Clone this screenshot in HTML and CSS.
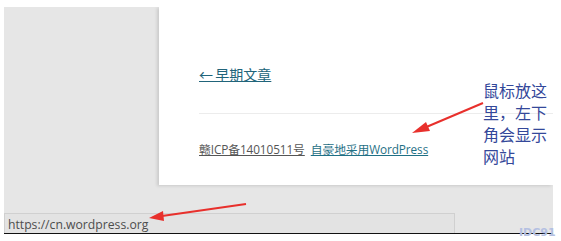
FILE: index.html
```html
<!DOCTYPE html>
<html lang="zh-CN">
<head>
    <meta charset="utf-8">
    <title>footer</title>
    <link rel="stylesheet" href="styles.css">
</head>
<body>
    <div class="screen">
        <div class="card">
            <a class="older" href="#">&larr;&thinsp;早期文章</a>
            <div class="sep"></div>
            <div class="foot">
                <a class="icp" href="#">赣ICP备14010511号</a>
                <a class="wp" href="https://cn.wordpress.org">自豪地采用WordPress</a>
            </div>
        </div>
        <div class="status">https://cn.wordpress.org</div>
    </div>

    <!-- annotation over the screenshot -->
    <div class="note">鼠标放这<br>里，左下<br>角会显示<br>网站</div>
    <svg class="arrows" width="561" height="241" viewBox="0 0 561 241">
        <line x1="483" y1="103" x2="424" y2="128" stroke="#e8302c" stroke-width="2"/>
        <polygon points="412,133 426,122 430,131" fill="#e8302c"/>
        <line x1="246" y1="204" x2="162" y2="216" stroke="#e8302c" stroke-width="2"/>
        <polygon points="149,218 163,211 164,221" fill="#e8302c"/>
    </svg>
    <div class="mark">IDC91</div>
</body>
</html>
```

FILE: styles.css
```css
body {
    margin: 0;
    width: 561px;
    height: 241px;
    background: #fff;
    overflow: hidden;
    font-family: "Open Sans", "Noto Sans CJK SC", sans-serif;
}

.screen {
    margin: 7px 0 0 4px;
    width: 549px;
    height: 226px;
    background: #e6e6e6;
    border-bottom: 1px solid #111;
    display: flex;
    flex-direction: column;
    overflow: hidden;
}

.card {
    margin-left: 155px;
    height: 178px;
    background: #fff;
    box-shadow: -2px 1px 3px rgba(0, 0, 0, 0.12);
    padding: 58px 0 0 40px;
    box-sizing: border-box;
    display: flex;
    flex-direction: column;
    align-items: flex-start;
}

.older {
    font-size: 14px;
    line-height: 20px;
    color: #21647a;
    text-decoration: underline;
}

.sep {
    align-self: stretch;
    margin-top: 28px;
    border-top: 1px solid #ececec;
}

.foot {
    margin-top: 26px;
    font-size: 11.8px;
    line-height: 18px;
    letter-spacing: -0.1px;
}

.icp {
    color: #555;
}

.wp {
    color: #1f7085;
    margin-left: 3px;
}

.status {
    margin-top: auto;
    width: 451px;
    height: 20px;
    box-sizing: border-box;
    background: #e3e3e3;
    border: 1px solid #d0d0d0;
    border-bottom: none;
    padding-left: 3px;
    font-size: 12.2px;
    line-height: 21px;
    color: #4d4d4d;
}

.note {
    position: absolute;
    left: 483px;
    top: 79px;
    font-family: "Noto Sans CJK SC", sans-serif;
    font-size: 16px;
    line-height: 22px;
    color: #34489a;
}

.arrows {
    position: absolute;
    left: 0;
    top: 0;
}

.mark {
    position: absolute;
    left: 519px;
    top: 226px;
    font-family: "DejaVu Sans", sans-serif;
    font-weight: bold;
    font-size: 11px;
    line-height: 14px;
    color: #b4c0e2;
}
```
